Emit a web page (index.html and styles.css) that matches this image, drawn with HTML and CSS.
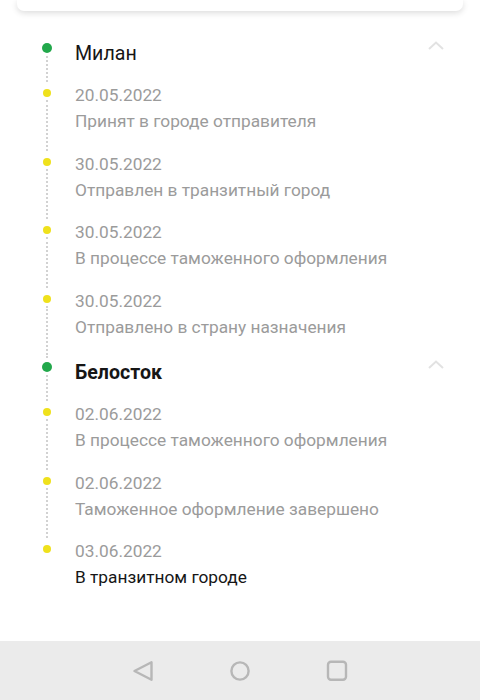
FILE: index.html
```html
<!DOCTYPE html>
<html lang="ru">
<head>
<meta charset="utf-8">
<link rel="stylesheet" href="styles.css">
</head>
<body>
<div class="page">
  <main class="main">
    <div class="card"></div>
    <div class="timeline">
      <section class="group">
        <div class="row head">
          <div class="marker"><span class="dot green"></span><span class="line"></span></div>
          <div class="title">Милан</div>
          <svg class="chev" width="16" height="9" viewBox="0 0 16 9"><path d="M1 8 L8 1.5 L15 8" fill="none" stroke="#e2e2e2" stroke-width="2"/></svg>
        </div>
        <div class="row item">
          <div class="marker"><span class="dot yellow"></span><span class="line"></span></div>
          <div class="text"><div class="date">20.05.2022</div><div class="desc">Принят в городе отправителя</div></div>
        </div>
        <div class="row item">
          <div class="marker"><span class="dot yellow"></span><span class="line"></span></div>
          <div class="text"><div class="date">30.05.2022</div><div class="desc">Отправлен в транзитный город</div></div>
        </div>
        <div class="row item">
          <div class="marker"><span class="dot yellow"></span><span class="line"></span></div>
          <div class="text"><div class="date">30.05.2022</div><div class="desc">В процессе таможенного оформления</div></div>
        </div>
        <div class="row item">
          <div class="marker"><span class="dot yellow"></span><span class="line"></span></div>
          <div class="text"><div class="date">30.05.2022</div><div class="desc">Отправлено в страну назначения</div></div>
        </div>
      </section>
      <section class="group">
        <div class="row head">
          <div class="marker"><span class="dot green"></span><span class="line"></span></div>
          <div class="title bold">Белосток</div>
          <svg class="chev" width="16" height="9" viewBox="0 0 16 9"><path d="M1 8 L8 1.5 L15 8" fill="none" stroke="#e2e2e2" stroke-width="2"/></svg>
        </div>
        <div class="row item">
          <div class="marker"><span class="dot yellow"></span><span class="line"></span></div>
          <div class="text"><div class="date">02.06.2022</div><div class="desc">В процессе таможенного оформления</div></div>
        </div>
        <div class="row item">
          <div class="marker"><span class="dot yellow"></span><span class="line"></span></div>
          <div class="text"><div class="date">02.06.2022</div><div class="desc">Таможенное оформление завершено</div></div>
        </div>
        <div class="row item last">
          <div class="marker"><span class="dot yellow"></span></div>
          <div class="text"><div class="date">03.06.2022</div><div class="desc current">В транзитном городе</div></div>
        </div>
      </section>
    </div>
  </main>
  <nav class="navbar">
    <svg class="nav-icon" width="24" height="24" viewBox="0 0 24 24"><path d="M20.5 3.2 L20.5 20.8 L3.5 12 Z" fill="none" stroke="#b7b7b7" stroke-width="2.4" stroke-linejoin="round"/></svg>
    <svg class="nav-icon" width="24" height="24" viewBox="0 0 24 24"><circle cx="12" cy="12" r="8.6" fill="none" stroke="#b7b7b7" stroke-width="2.4"/></svg>
    <svg class="nav-icon" width="24" height="24" viewBox="0 0 24 24"><rect x="3" y="2.8" width="18" height="18" rx="3" fill="none" stroke="#b7b7b7" stroke-width="2.4"/></svg>
  </nav>
</div>
</body>
</html>
```

FILE: styles.css
```css
* { box-sizing: border-box; }
html, body { margin: 0; padding: 0; background: #fff; }
body { font-family: Roboto, "Noto Sans", "Liberation Sans", sans-serif; }

.page {
  width: 480px;
  height: 700px;
  display: flex;
  flex-direction: column;
  overflow: hidden;
}
.main {
  flex: 1;
  display: flex;
  flex-direction: column;
}
.card {
  height: 11px;
  margin: 0 17px;
  background: #fff;
  border-radius: 0 0 7px 7px;
  box-shadow: 0 2px 6px rgba(0,0,0,0.14);
}
.timeline {
  padding: 28px 36px 0 32px;
  display: flex;
  flex-direction: column;
  gap: 2px;
}
.row {
  display: grid;
  grid-template-columns: 30px 1fr auto;
  column-gap: 13px;
}
.marker {
  display: flex;
  flex-direction: column;
  align-items: center;
}
.dot {
  border-radius: 50%;
  flex: none;
}
.dot.green {
  width: 10px;
  height: 10px;
  background: #22a84b;
  margin-top: 4px;
}
.dot.yellow {
  width: 8px;
  height: 8px;
  background: #efe11c;
  margin-top: 7px;
}
.line {
  flex: 1;
  width: 0;
  border-left: 2px dotted #d2d2d2;
  margin-top: 3px;
}
.head { height: 43px; }
.item { padding-bottom: 16.5px; }
.item .line { margin-bottom: -16.5px; }
.head .line { margin-bottom: 0; }
.group:first-child .item:nth-child(5) .line { margin-bottom: -18.5px; }
.title {
  font-size: 19.6px;
  line-height: 26px;
  padding-top: 2px;
  color: #161616;
  font-weight: 400;
}
.title.bold { font-weight: 700; }
.chev { margin-top: 2px; }
.date, .desc {
  font-size: 17.3px;
  line-height: 26px;
  color: #9b9b9b;
}
.desc.current { color: #161616; }
.navbar {
  height: 59px;
  flex: none;
  background: #ebebeb;
  display: flex;
  align-items: center;
  justify-content: center;
  gap: 73px;
}
.nav-icon { display: block; }
```
